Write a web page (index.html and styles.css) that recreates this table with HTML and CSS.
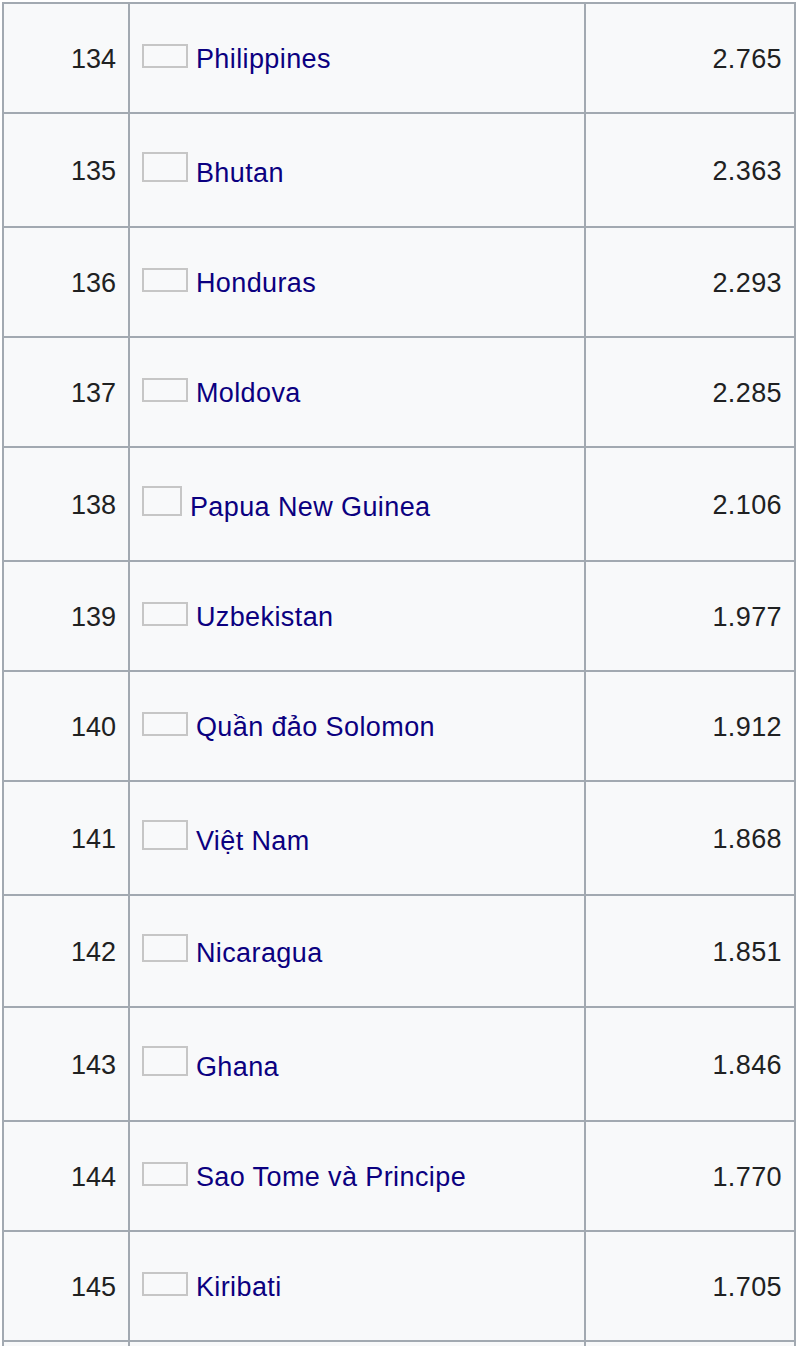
FILE: index.html
```html
<!DOCTYPE html>
<html lang="vi">
<head>
<meta charset="utf-8">
<title>Danh sách</title>
<link rel="stylesheet" href="styles.css">
</head>
<body>
<table class="ranking">
  <colgroup>
    <col class="col-rank">
    <col class="col-country">
    <col class="col-value">
  </colgroup>
  <tbody>
    <tr><td class="rank">134</td><td class="country"><span class="flag flag-wide"></span> <a href="#">Philippines</a></td><td class="value">2.765</td></tr>
    <tr><td class="rank">135</td><td class="country"><span class="flag flag-tall"></span> <a href="#">Bhutan</a></td><td class="value">2.363</td></tr>
    <tr><td class="rank">136</td><td class="country"><span class="flag flag-wide"></span> <a href="#">Honduras</a></td><td class="value">2.293</td></tr>
    <tr><td class="rank">137</td><td class="country"><span class="flag flag-wide"></span> <a href="#">Moldova</a></td><td class="value">2.285</td></tr>
    <tr><td class="rank">138</td><td class="country"><span class="flag flag-square"></span> <a href="#">Papua New Guinea</a></td><td class="value">2.106</td></tr>
    <tr><td class="rank">139</td><td class="country"><span class="flag flag-wide"></span> <a href="#">Uzbekistan</a></td><td class="value">1.977</td></tr>
    <tr><td class="rank">140</td><td class="country"><span class="flag flag-wide"></span> <a href="#">Quần đảo Solomon</a></td><td class="value">1.912</td></tr>
    <tr><td class="rank">141</td><td class="country"><span class="flag flag-tall"></span> <a href="#">Việt Nam</a></td><td class="value">1.868</td></tr>
    <tr><td class="rank">142</td><td class="country"><span class="flag flag-mid"></span> <a href="#">Nicaragua</a></td><td class="value">1.851</td></tr>
    <tr><td class="rank">143</td><td class="country"><span class="flag flag-tall"></span> <a href="#">Ghana</a></td><td class="value">1.846</td></tr>
    <tr><td class="rank">144</td><td class="country"><span class="flag flag-wide"></span> <a href="#">Sao Tome và Principe</a></td><td class="value">1.770</td></tr>
    <tr><td class="rank">145</td><td class="country"><span class="flag flag-wide"></span> <a href="#">Kiribati</a></td><td class="value">1.705</td></tr>
    <tr class="row-next"><td class="rank"></td><td class="country"></td><td class="value"></td></tr>
  </tbody>
</table>
</body>
</html>
```
FILE: styles.css
```css
html, body {
  margin: 0;
  padding: 0;
  background: #ffffff;
}

body {
  font-family: "Liberation Sans", Arial, Helvetica, sans-serif;
  font-size: 27px;
  line-height: 34px;
  letter-spacing: 0.4px;
  color: #202122;
}

.ranking {
  margin: 2px 0 0 2px;
  width: 794px;
  table-layout: fixed;
  border-collapse: collapse;
  background: #f8f9fa;
  border: 2px solid #a2a9b1;
}

.col-rank { width: 126px; }
.col-country { width: 456px; }
.col-value { width: 210px; }

.ranking td {
  border: 2px solid #a2a9b1;
  padding: 38px 12px 36px 12px;
  vertical-align: middle;
  white-space: nowrap;
}

.ranking .rank,
.ranking .value {
  text-align: right;
}

.ranking .rank {
  letter-spacing: 0;
}

.ranking .country {
  text-align: left;
}

.country a {
  color: #0b0080;
  text-decoration: none;
}

.flag {
  display: inline-block;
  box-sizing: border-box;
  border: 2px solid #c6c6c6;
  vertical-align: baseline;
  width: 46px;
  height: 24px;
}

.flag-tall {
  height: 30px;
}

.flag-mid {
  height: 28px;
}

.flag-square {
  width: 40px;
  height: 30px;
}

.row-next td {
  height: 34px;
}
```
